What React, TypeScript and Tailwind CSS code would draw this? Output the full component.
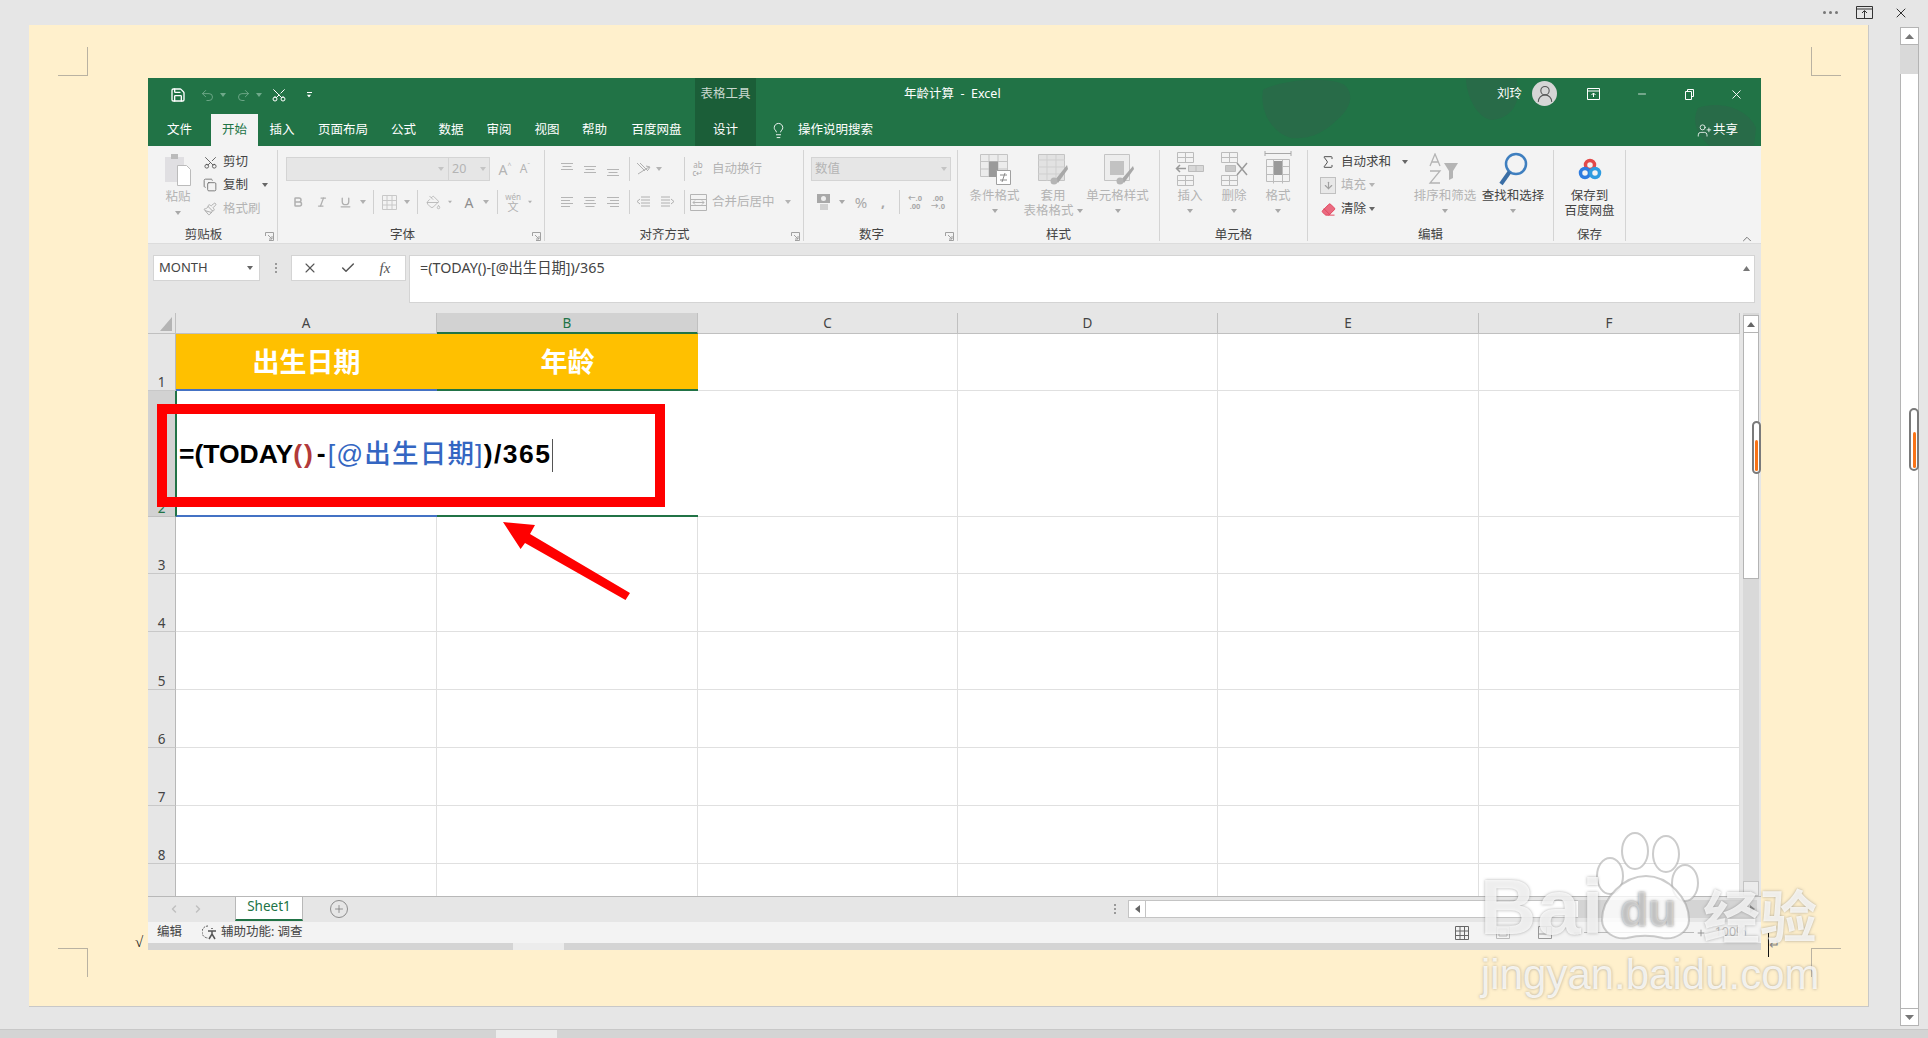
import React from 'react';
import {
  Save, Undo2, Redo2, Scissors, Copy, Paintbrush, Bold, Italic, Underline, PaintBucket,
  Lightbulb, X, Minus, Check, ChevronUp, ChevronLeft, ChevronRight, Plus, UserRound, UserPlus,
  Sigma, ArrowDown, Eraser,
} from 'lucide-react';

const Drop: React.FC<{ className?: string }> = ({ className = '' }) => (
  <svg width="6" height="4" viewBox="0 0 6 4" className={className}><path d="M0 0h6L3 4z" fill="currentColor" /></svg>
);

const Sep = ({ className = '' }: { className?: string }) => <div className={`w-px h-[24px] bg-[#d0d0d0] shrink-0 ${className}`} />;

const Launcher = () => (
  <svg width="9" height="9" viewBox="0 0 9 9" className="absolute right-[3px] top-[4px] text-[#a0a0a0]">
    <path d="M.5 4V.5H8.5V8.5H4M3 3l4 4M7 4v3H4" fill="none" stroke="currentColor" />
  </svg>
);

const Group: React.FC<{ w: string; label: string; labelPad?: string; launcher?: boolean; children: React.ReactNode }> = ({ w, label, labelPad = '', launcher, children }) => (
  <div className={`${w} shrink-0 h-[91px] flex flex-col border-r border-[#d4d4d4]`}>
    <div className="h-[78px] shrink-0">{children}</div>
    <div className={`relative h-[14px] flex items-center justify-center text-[#444] ${labelPad}`}>
      <span>{label}</span>
      {launcher && <Launcher />}
    </div>
  </div>
);

const Cell: React.FC<{ className: string; children?: React.ReactNode }> = ({ className, children }) => (
  <div className={`flex items-center justify-center shrink-0 ${className}`}>{children}</div>
);

// align lines: pos 0 left, 1 centre, 2 right
const AlignIcon = ({ pos, v = 0 }: { pos: number; v?: number }) => {
  const lens = [[1, 12], [1, 9], [1, 12], [1, 9]];
  return (
    <svg width="14" height="14" viewBox="0 0 14 14" fill="none" stroke="#b5b5b5">
      {lens.slice(0, v ? 3 : 4).map(([x, l], i) => {
        const start = pos === 0 ? x : pos === 1 ? (14 - l) / 2 : 13 - l;
        return <path key={i} d={`M${start} ${(v ? v + i * 3 : 2 + i * 3) + 0.5}h${l}`} />;
      })}
    </svg>
  );
};

const SheetIcon: React.FC<{ kind: string }> = ({ kind }) => {
  if (kind === 'cond') return (
    <svg width="32" height="32" viewBox="0 0 32 32">
      <path d="M1.5 1.5h27v22h-27z" fill="#ececec" stroke="#c4c4c4" />
      <path d="M10 1v23M19 1v23M1 8.5h28M1 16h28" stroke="#c4c4c4" />
      <path d="M10 8.5h9V24h-9z" fill="#9a9a9a" />
      <path d="M17.5 17.5h14v14h-14z" fill="#fff" stroke="#a0a0a0" />
      <path d="M21 22h7M21 27h7M26 20l-3 9" stroke="#8a8a8a" />
    </svg>
  );
  if (kind === 'table') return (
    <svg width="34" height="32" viewBox="0 0 34 32">
      <path d="M2.5 1.5h26v26h-26z" fill="#e2e2e2" stroke="#c4c4c4" />
      <path d="M2 7h27M11 2v26M20 2v26M2 14h27M2 21h27" stroke="#cfcfcf" />
      <path d="M31 12 19 27l3 3 10-14z" fill="#a8a8a8" />
      <circle cx="18" cy="28" r="3.5" fill="#b5b5b5" />
    </svg>
  );
  if (kind === 'style') return (
    <svg width="34" height="32" viewBox="0 0 34 32">
      <path d="M3.5 1.5h25v26h-25z" fill="#ededed" stroke="#c4c4c4" />
      <path d="M9 8h14v14H9z" fill="#c2c2c2" />
      <path d="M32 13 20 27l3 3 10-14z" fill="#a8a8a8" />
      <circle cx="19" cy="28" r="3.5" fill="#b5b5b5" />
    </svg>
  );
  if (kind === 'insert') return (
    <svg width="30" height="36" viewBox="0 0 30 36" fill="none" stroke="#bcbcbc">
      <path d="M2.5 1.5h16v10h-16zM2.5 6.5h16M10.5 1.5v10M2.5 24.5h16v10h-16zM2.5 29.5h16M10.5 24.5v10" />
      <path d="M13.5 14.5h15v6h-15zM21 14.5v6" fill="#d8d8d8" />
      <path d="M11 17.5H2M5 14l-3.500 3.500L5 21" stroke="#9a9a9a" strokeWidth="1.500" />
    </svg>
  );
  if (kind === 'delete') return (
    <svg width="30" height="36" viewBox="0 0 30 36" fill="none" stroke="#bcbcbc">
      <path d="M2.5 1.5h16v10h-16zM2.500 6.500h16M10.500 1.500v10M2.500 24.500h16v10h-16zM2.500 29.500h16M10.500 24.500v10" />
      <path d="M6.500 14.500h10v6h-10z" fill="#c8c8c8" />
      <path d="m18 12 10 12M28 12 18 24" stroke="#9a9a9a" strokeWidth="1.500" />
    </svg>
  );
  return (
    <svg width="30" height="38" viewBox="0 0 30 38" fill="none" stroke="#bcbcbc">
      <path d="M2 3.500h26M2 1v5M28 1v5" stroke="#a8a8a8" />
      <path d="M3.500 9.500h23v22h-23zM3.500 16.500h23M3.500 24.500h23M10.500 9.500v24M19.500 9.500v24" />
      <path d="M11 11h8v14h-8z" fill="#9a9a9a" stroke="none" />
    </svg>
  );
};

const BigBtn: React.FC<{ w: string; icon: React.ReactNode; l1: string; l2?: React.ReactNode; dark?: boolean; nodrop?: boolean }> = ({ w, icon, l1, l2, dark, nodrop }) => (
  <div className={`${w} shrink-0 flex flex-col items-center whitespace-nowrap ${dark ? 'text-[#444]' : 'text-[#b4b4b4]'}`}>
    <div className="h-[38px] flex items-center justify-center">{icon}</div>
    <div className="h-[15px] leading-[15px]">{l1}</div>
    <div className="h-[16px] leading-[16px] flex items-center justify-center gap-[3px]">
      {l2 ?? (!nodrop && <Drop className="text-[#a8a8a8]" />)}
    </div>
  </div>
);

const Ribbon = () => (
  <div className="h-[97px] bg-[#f3f3f3] flex pt-[4px] text-[12.5px]">
    <Group w="w-[130px]" label="剪贴板" labelPad="pr-[18px]" launcher>
      <div className="flex">
        <div className="w-[54px] pl-[6px] flex flex-col items-center text-[#b4b4b4]">
          <svg width="28" height="34" viewBox="0 0 28 34" className="mt-[3px]">
            <path d="M1 4h19v25H1z" fill="#e0dfe2" />
            <path d="M7 1h7v5H7z" fill="#bbb" />
            <path d="M13.500 12.500h9l4 4v16h-13z" fill="#fff" stroke="#bbb" />
          </svg>
          <span className="mt-[3px] leading-[14px]">粘贴</span>
          <Drop className="mt-[7px] text-[#a8a8a8]" />
        </div>
        <div className="flex flex-col pt-[1px]">
          <div className="h-[22px] flex items-center gap-[5px] text-[#444]"><Cell className="w-[16px]"><Scissors size={15} strokeWidth={1.4} className="text-[#555] -rotate-90" /></Cell>剪切</div>
          <div className="h-[24px] flex items-center gap-[5px] text-[#444]"><Cell className="w-[16px]"><Copy size={14} strokeWidth={1.4} className="text-[#666]" /></Cell>复制<Drop className="ml-[9px] text-[#666]" /></div>
          <div className="h-[24px] flex items-center gap-[5px] text-[#b4b4b4]"><Cell className="w-[16px]"><Paintbrush size={14} strokeWidth={1.6} className="text-[#a8a8a8]" /></Cell>格式刷</div>
        </div>
      </div>
    </Group>

    <Group w="w-[267px]" label="字体" labelPad="pr-[17px]" launcher>
      <div className="flex items-center pt-[7px] pl-[8px] text-[#b4b4b4]">
        <div className="w-[163px] h-[24px] bg-[#e6e6e6] border border-[#d4d4d4] flex items-center justify-end pr-[4px] shrink-0"><Drop className="text-[#c4c4c4]" /></div>
        <div className="w-[41px] h-[24px] bg-[#e6e6e6] border border-l-0 border-[#d4d4d4] flex items-center justify-between px-[3px] shrink-0">20<Drop className="text-[#c4c4c4]" /></div>
        <Cell className="w-[20px] ml-[5px] text-[14px]">A<sup className="text-[7px]">^</sup></Cell>
        <Cell className="w-[20px] text-[12px]">A<sup className="text-[7px]">ˇ</sup></Cell>
      </div>
      <div className="flex items-center h-[24px] mt-[9px] pl-[8px] text-[#b0b0b0]">
        <Cell className="w-[23px]"><Bold size={12} strokeWidth={3} /></Cell>
        <Cell className="w-[26px]"><Italic size={12} strokeWidth={2.500} /></Cell>
        <Cell className="w-[20px]"><Underline size={13} strokeWidth={2.500} /></Cell>
        <Cell className="w-[16px]"><Drop /></Cell>
        <Sep className="ml-[2px]" />
        <Cell className="w-[30px]">
          <svg width="15" height="15" viewBox="0 0 15 15" fill="none" stroke="#c8c8c8"><path d="M.5.5h14v14H.5zM.5 5.500h14M.5 10h14M5 .5v14M10 .5v14" /></svg>
        </Cell>
        <Cell className="w-[6px]"><Drop /></Cell>
        <Sep className="ml-[7px]" />
        <Cell className="w-[30px]"><PaintBucket size={15} strokeWidth={1.300} /></Cell>
        <Cell className="w-[4px]"><Drop /></Cell>
        <Cell className="w-[24px] ml-[5px] text-[14px] text-[#8e8e8e]">A</Cell>
        <Cell className="w-[10px]"><Drop /></Cell>
        <Sep className="ml-[6px]" />
        <Cell className="w-[30px] flex-col text-[8px] leading-[9px]"><span>wén</span><span className="text-[11px] leading-[11px]">文</span></Cell>
        <Cell className="w-[4px]"><Drop /></Cell>
      </div>
    </Group>

    <Group w="w-[259px]" label="对齐方式" labelPad="pr-[19px]" launcher>
      <div className="flex items-center h-[24px] mt-[7px] pl-[10px] text-[#b4b4b4]">
        <Cell className="w-[23px]"><AlignIcon pos={1} v={1} /></Cell>
        <Cell className="w-[23px]"><AlignIcon pos={1} v={4} /></Cell>
        <Cell className="w-[23px]"><AlignIcon pos={1} v={7} /></Cell>
        <Sep className="ml-[5px]" />
        <Cell className="w-[26px]">
          <svg width="15" height="14" viewBox="0 0 15 14" fill="none" stroke="#b0b0b0"><path d="M1 1l8 8M4 1l8 8M2 12 13 5M10 4l4 1-2 3" /></svg>
        </Cell>
        <Cell className="w-[6px]"><Drop /></Cell>
        <Sep className="ml-[22px]" />
        <Cell className="w-[26px] text-[8px] leading-[8px] flex-col text-[#a8a8a8]"><span>ab</span><span>c↵</span></Cell>
        <span className="ml-px whitespace-nowrap">自动换行</span>
      </div>
      <div className="flex items-center h-[24px] mt-[9px] pl-[10px] text-[#b4b4b4]">
        <Cell className="w-[23px]"><AlignIcon pos={0} /></Cell>
        <Cell className="w-[23px]"><AlignIcon pos={1} /></Cell>
        <Cell className="w-[23px]"><AlignIcon pos={2} /></Cell>
        <Sep className="ml-[5px]" />
        <Cell className="w-[26px]">
          <svg width="14" height="14" viewBox="0 0 14 14" fill="none" stroke="#b0b0b0"><path d="M5 2h9M5 5h9M5 8h9M5 11h9M4 4 1 6.500 4 9" /></svg>
        </Cell>
        <Cell className="w-[23px]">
          <svg width="14" height="14" viewBox="0 0 14 14" fill="none" stroke="#b0b0b0"><path d="M0 2h9M0 5h9M0 8h9M0 11h9M10 4l3 2.500L10 9" /></svg>
        </Cell>
        <Sep className="ml-[5px]" />
        <Cell className="w-[26px]">
          <svg width="17" height="17" viewBox="0 0 17 17" fill="none" stroke="#b4b4b4"><path d="M.5.5h16v16H.5zM.5 5.500h16M.5 11.500h16M3 8.500h11M5 6.500l-2 2 2 2M12 6.500l2 2-2 2" /></svg>
        </Cell>
        <span className="ml-px whitespace-nowrap">合并后居中</span>
        <Drop className="ml-[10px]" />
      </div>
    </Group>

    <Group w="w-[154px]" label="数字" labelPad="pr-[18px]" launcher>
      <div className="ml-[7px] mt-[7px] w-[140px] h-[24px] bg-[#e6e6e6] border border-[#d4d4d4] flex items-center justify-between px-[3px] text-[#b4b4b4]">数值<Drop className="text-[#c4c4c4]" /></div>
      <div className="flex items-center h-[24px] mt-[9px] pl-[8px] text-[#a8a8a8]">
        <Cell className="w-[24px]">
          <svg width="14" height="16" viewBox="0 0 14 16"><path d="M0 0h13v9H0z" fill="#a8a8a8" /><circle cx="6.500" cy="4.500" r="2.500" fill="#eee" /><path d="M3 10h8v6H3z" fill="#d0d0d0" /></svg>
        </Cell>
        <Cell className="w-[12px]"><Drop /></Cell>
        <Cell className="w-[26px] text-[15px] leading-none">%</Cell>
        <Cell className="w-[18px] font-bold text-[14px] leading-[14px]">,</Cell>
        <Sep className="ml-[7px]" />
        <Cell className="w-[30px] flex-col text-[7.500px] leading-[8px] font-bold"><span>←.0</span><span>.00</span></Cell>
        <Cell className="w-[16px] flex-col text-[7.500px] leading-[8px] font-bold"><span>.00</span><span>→.0</span></Cell>
      </div>
    </Group>

    <Group w="w-[202px]" label="样式">
      <div className="flex">
        <BigBtn w="w-[73px]" icon={<SheetIcon kind="cond" />} l1="条件格式" />
        <BigBtn w="w-[44px]" icon={<SheetIcon kind="table" />} l1="套用" l2={<>表格格式<Drop className="text-[#a8a8a8]" /></>} />
        <BigBtn w="w-[85px]" icon={<SheetIcon kind="style" />} l1="单元格样式" />
      </div>
    </Group>

    <Group w="w-[148px]" label="单元格">
      <div className="flex pl-[8px]">
        <BigBtn w="w-[44px]" icon={<SheetIcon kind="insert" />} l1="插入" />
        <BigBtn w="w-[44px]" icon={<SheetIcon kind="delete" />} l1="删除" />
        <BigBtn w="w-[44px]" icon={<SheetIcon kind="format" />} l1="格式" />
      </div>
    </Group>

    <Group w="w-[246px]" label="编辑">
      <div className="flex pl-[12px]">
        <div className="w-[93px] shrink-0 flex flex-col pt-[1px]">
          <div className="h-[22px] flex items-center gap-[5px] text-[#444]"><Cell className="w-[16px]"><Sigma size={18} strokeWidth={1.400} className="text-[#444]" /></Cell>自动求和<Drop className="ml-[6px] text-[#666]" /></div>
          <div className="h-[24px] flex items-center gap-[5px] text-[#b4b4b4]"><Cell className="w-[16px] h-[17px] border border-[#c0c0c0] bg-[#e8e8e8]"><ArrowDown size={11} strokeWidth={2.500} className="text-[#a0a0a0]" /></Cell>填充<Drop className="-ml-[2px]" /></div>
          <div className="h-[24px] flex items-center gap-[5px] text-[#444]"><Cell className="w-[16px]"><Eraser size={15} strokeWidth={1.500} className="text-[#e0455d] fill-[#ea6a80]" /></Cell>清除<Drop className="-ml-[2px] text-[#666]" /></div>
        </div>
        <BigBtn w="w-[64px]" icon={
          <svg width="34" height="32" viewBox="0 0 34 32" fill="none" stroke="#b4b4b4">
            <path d="M2 13 7 1l5 12M4 9h6M2 18h10L2 30h10" strokeWidth="1.300" />
            <path d="M16 10h14l-5 8v7l-4 2v-9z" fill="#b4b4b4" stroke="none" />
          </svg>
        } l1="排序和筛选" />
        <BigBtn w="w-[72px]" dark icon={
          <svg width="30" height="36" viewBox="0 0 30 36" fill="none">
            <circle cx="18" cy="13" r="10" stroke="#3f7fbf" strokeWidth="2.500" />
            <path d="M11.500 21 3 33" stroke="#3a6ea5" strokeWidth="4" />
          </svg>
        } l1="查找和选择" />
      </div>
    </Group>

    <Group w="w-[72px]" label="保存">
      <BigBtn w="w-full" dark nodrop icon={
        <svg width="24" height="24" viewBox="0 0 24 24" fill="none" strokeWidth="3.500">
          <circle cx="12" cy="8" r="4.500" stroke="#e24a4a" />
          <circle cx="7" cy="16" r="4.500" stroke="#2e7ce0" />
          <circle cx="17" cy="16" r="4.500" stroke="#2e9ce0" />
        </svg>
      } l1="保存到" l2="百度网盘" />
    </Group>

    <div className="flex-1 flex items-start justify-end pr-[7px] pt-[82px]"><ChevronUp size={14} strokeWidth={1.500} className="text-[#666]" /></div>
  </div>
);

const COLS = ['A', 'B', 'C', 'D', 'E', 'F'];
const ROWS = ['1', '2', '3', '4', '5', '6', '7', '8', ''];

const Grid = () => (
  <div className="w-[1592px] shrink-0 h-[583px] overflow-hidden grid grid-cols-[28px_261px_261px_260px_260px_261px_261px] grid-rows-[21px_57px_126px_57px_58px_58px_58px_58px_58px_40px] bg-white">
    <div className="bg-[#e6e6e6] border-r border-b border-[#c0c0c0] flex items-end justify-end pr-[3px] pb-[2px]">
      <svg width="12" height="14" viewBox="0 0 12 14"><path d="M12 0v14H0z" fill="#b4b4b4" /></svg>
    </div>
    {COLS.map((c) => (
      <div key={c} className={`flex items-center justify-center pt-[2px] text-[13.500px] leading-none border-r border-[#c0c0c0] ${c === 'B' ? 'bg-[#d2d2d2] text-[#217346] border-b-2 border-b-[#217346]' : 'bg-[#e6e6e6] text-[#444] border-b border-b-[#c0c0c0]'}`}>{c}</div>
    ))}
    {ROWS.map((r, i) => (
      <React.Fragment key={i}>
        <div className={`flex items-end justify-center text-[13.500px] leading-[16px] border-r border-b ${i === 1 ? 'bg-[#d2d2d2] text-[#217346] border-r-[#217346] border-b-[#c0c0c0]' : 'bg-[#e6e6e6] text-[#444] border-r-[#b8b8b8] border-b-[#c8c8c8]'}`}>{r}</div>
        {COLS.map((c, j) => {
          if (i === 0 && j === 0) return <div key={c} className="bg-[#ffc000] flex items-center justify-center pb-[1px] text-white font-bold text-[27px] leading-none border-b-2 border-[#4472c4]">出生日期</div>;
          if (i === 0 && j === 1) return <div key={c} className="bg-[#ffc000] flex items-center justify-center pb-[1px] text-white font-bold text-[27px] leading-none border-b-2 border-[#217346]">年龄</div>;
          if (i === 1 && j === 0) return (
            <div key={c} className="flex items-center pl-[2px] pt-[4px] whitespace-nowrap border-l border-b-2 border-l-[#217346] border-b-[#4472c4] [font-family:'Liberation_Sans','Noto_Sans_CJK_SC',sans-serif] font-bold text-[26.500px] leading-none text-black">
              <span>=(TODAY<span className="text-[#b23a3a] tracking-[2px]">()</span><span className="mx-[2px]">-</span><span className="text-[#3466c2] font-medium tracking-[1.200px]">[@出生日期]</span><span className="tracking-[1.500px]">)/365</span><span className="inline-block w-px h-[33px] bg-[#555] align-middle" /></span>
            </div>
          );
          if (i === 1 && j === 1) return <div key={c} className="border-b-2 border-[#217346]" />;
          return <div key={c} className="border-r border-b border-[#e0e0e0]" />;
        })}
      </React.Fragment>
    ))}
  </div>
);

const SliderHandle = ({ outer, fill }: { outer: string; fill: string }) => (
  <div className={`absolute rounded-full border-2 border-[#7a7a7a] bg-white flex flex-col justify-end items-center pb-[1px] ${outer}`}>
    <div className={`w-[3px] bg-[#f97316] rounded-full ${fill}`} />
  </div>
);

const Excel = () => (
  <div className="w-[1613px] shrink-0 h-[872px] flex flex-col text-[#444] relative">
    <div className="relative bg-[#217346] shrink-0">
      <svg className="absolute inset-0" width="1613" height="68" viewBox="0 0 1613 68" fill="#286b48">
        <path d="M1115 12c18-10 60-14 80-6 12 8 8 24-4 34-10 10-24 22-48 20-16-4-32-24-28-48zM1318 0h50c6 18 0 40-24 42-16-2-26-26-26-42zM1550 30c20-8 50 0 58 20l-2 18h-44c-10-8-20-22-12-38z" />
      </svg>
      {/* title bar */}
      <div className="relative h-[36px] flex text-white text-[12.5px]">
        <div className="w-[547px] shrink-0 flex items-center pb-[2px]">
          <Cell className="w-[47px] pl-[13px]"><Save size={16} strokeWidth={2} /></Cell>
          <Cell className="w-[24px]"><Undo2 size={15} strokeWidth={1.500} className="text-[#6fa98a]" /></Cell>
          <Drop className="text-[#6fa98a] ml-[1px]" />
          <Cell className="w-[24px] ml-[5px]"><Redo2 size={15} strokeWidth={1.500} className="text-[#6fa98a]" /></Cell>
          <Drop className="text-[#6fa98a] ml-[1px]" />
          <Cell className="w-[24px] ml-[5px]"><Scissors size={16} strokeWidth={1.500} className="-rotate-90" /></Cell>
          <span className="ml-[15px] flex flex-col items-center gap-[1px]"><span className="w-[5px] h-px bg-white" /><Drop className="scale-75" /></span>
        </div>
        <div className="w-[61px] shrink-0 bg-[#1b5e38] flex items-center justify-center pb-[4px] text-[#c9d8cf]">表格工具</div>
        <div className="w-[148px] shrink-0" />
        <div className="w-[100px] shrink-0 flex items-center pb-[4px] whitespace-nowrap">年龄计算&nbsp; -&nbsp; Excel</div>
        <div className="w-[518px] shrink-0 flex items-center justify-end pb-[4px] whitespace-nowrap">刘玲</div>
        <Cell className="w-[25px] h-[25px] mt-[3px] ml-[10px] rounded-full bg-[#d6d6d6]"><UserRound size={20} strokeWidth={1.300} className="text-[#555]" /></Cell>
        <Cell className="w-[22px] ml-[25px] pb-[4px]">
          <svg width="13" height="12" viewBox="0 0 13 12" fill="none" stroke="#fff"><path d="M.5.5h12v11H.5zM.5 3h12M6.500 5v4M4.500 7l2-2 2 2" /></svg>
        </Cell>
        <Cell className="w-[22px] ml-[27px] pb-[4px]"><Minus size={12} strokeWidth={1.500} /></Cell>
        <Cell className="w-[22px] ml-[24px] pb-[4px]">
          <svg width="11" height="11" viewBox="0 0 11 11" fill="none" stroke="#fff"><path d="M2.500 2.500h6v8h-6zM4.500 2V.5h6v7H9" /></svg>
        </Cell>
        <Cell className="w-[22px] ml-[26px] pb-[4px]"><X size={15} strokeWidth={1.500} /></Cell>
      </div>

      {/* tabs */}
      <div className="relative h-[32px] flex items-center text-white text-[12.5px]">
        <Cell className="w-[63px] h-full">文件</Cell>
        <Cell className="w-[47px] h-full bg-[#f3f3f3] text-[#217346]">开始</Cell>
        <Cell className="w-[48px] h-full">插入</Cell>
        <Cell className="w-[74px] h-full">页面布局</Cell>
        <Cell className="w-[47px] h-full">公式</Cell>
        <Cell className="w-[48px] h-full">数据</Cell>
        <Cell className="w-[48px] h-full">审阅</Cell>
        <Cell className="w-[48px] h-full">视图</Cell>
        <Cell className="w-[47px] h-full">帮助</Cell>
        <Cell className="w-[77px] h-full">百度网盘</Cell>
        <Cell className="w-[61px] h-full bg-[#1b5e38]">设计</Cell>
        <Cell className="w-[44px] h-full"><Lightbulb size={17} strokeWidth={1.300} /></Cell>
        <span className="-ml-[2px]">操作说明搜索</span>
        <div className="ml-auto mr-[23px] flex items-center gap-[1px]"><UserPlus size={15} strokeWidth={1.300} /><span>共享</span></div>
      </div>
    </div>

    <Ribbon />

    {/* formula bar */}
    <div className="h-[70px] bg-[#e6e6e6] border-t border-[#dcdcdc] pt-[11px] flex items-start shrink-0">
      <div className="ml-[5px] w-[107px] h-[26px] bg-white border border-[#d4d4d4] flex items-center justify-between pl-[5px] pr-[6px] text-[13px]">MONTH<Drop className="text-[#666]" /></div>
      <Cell className="w-[31px] h-[26px] text-[#aaa] flex-col gap-[2px]"><span className="w-[2px] h-[2px] bg-[#999]" /><span className="w-[2px] h-[2px] bg-[#999]" /><span className="w-[2px] h-[2px] bg-[#999]" /></Cell>
      <div className="w-[115px] h-[26px] bg-white border border-[#d4d4d4] flex items-center text-[#555]">
        <Cell className="w-[36px]"><X size={16} strokeWidth={1.600} /></Cell>
        <Cell className="w-[39px]"><Check size={16} strokeWidth={2.200} /></Cell>
        <Cell className="w-[36px] italic text-[15px] [font-family:'Liberation_Serif',serif]">fx</Cell>
      </div>
      <div className="ml-[3px] w-[1346px] h-[48px] bg-white border border-[#d4d4d4] flex items-start justify-between pl-[10px] pr-[4px] pt-[3px] text-[14.300px] leading-[18px] text-[#444]">
        <span>=(TODAY()-[@出生日期])/365</span>
        <svg width="7" height="5" viewBox="0 0 7 5" className="mt-[7px] text-[#777]"><path d="M0 5 3.500 0 7 5z" fill="currentColor" /></svg>
      </div>
    </div>

    {/* sheet */}
    <div className="flex relative shrink-0 h-[583px]">
      <Grid />
      <div className="w-[3px] bg-[#e6e6e6] shrink-0" />
      <div className="w-[16px] shrink-0 flex flex-col bg-[#d9d9d9]">
        <div className="h-[18px] mt-[2px] bg-white border border-[#b4b4b4] flex items-center justify-center"><svg width="8" height="5" viewBox="0 0 8 5"><path d="M0 5 4 0l4 5z" fill="#666" /></svg></div>
        <div className="h-[246px] bg-white border-x border-b border-[#b4b4b4]" />
        <div className="flex-1" />
        <div className="h-[15px] bg-[#ececec] border border-[#c4c4c4]" />
      </div>
      <div className="w-[2px] bg-[#e6e6e6] shrink-0" />
      <SliderHandle outer="left-[1604px] top-[108px] w-[9px] h-[53px]" fill="h-[31px]" />
    </div>

    {/* sheet tabs */}
    <div className="h-[26px] bg-[#e6e6e6] border-t border-[#b8b8b8] flex items-start text-[#c0c0c0] shrink-0">
      <Cell className="w-[38px] h-[24px] pl-[14px]"><ChevronLeft size={12} strokeWidth={3} /></Cell>
      <Cell className="w-[24px] h-[24px]"><ChevronRight size={12} strokeWidth={3} /></Cell>
      <div className="ml-[25px] w-[68px] h-[24px] bg-white border-x border-b-2 border-x-[#b8b8b8] border-b-[#217346] flex items-center justify-center pb-[3px] text-[13.500px] text-[#217346]">Sheet1</div>
      <Cell className="ml-[27px] mt-[3px] w-[18px] h-[18px] rounded-full border border-[#8c8c8c] text-[#777]"><Plus size={12} strokeWidth={1.500} /></Cell>
      <div className="ml-[757px] w-[20px] h-[24px] flex flex-col items-center justify-center gap-[2px]"><span className="w-[2px] h-[2px] bg-[#999]" /><span className="w-[2px] h-[2px] bg-[#999]" /><span className="w-[2px] h-[2px] bg-[#999]" /></div>
      <div className="ml-[3px] mt-[3px] w-[18px] h-[18px] bg-white border border-[#c4c4c4] flex items-center justify-center text-[#555]"><svg width="5" height="8" viewBox="0 0 5 8"><path d="M5 0v8L0 4z" fill="#666" /></svg></div>
      <div className="mt-[3px] w-[432px] h-[18px] bg-white border-y border-[#c4c4c4]" />
      <div className="mt-[3px] w-[179px] h-[18px] bg-[#d4d4d4] flex items-center justify-end pr-[2px]"><svg width="5" height="8" viewBox="0 0 5 8"><path d="M0 0v8l5-4z" fill="#888" /></svg></div>
    </div>

    {/* status bar */}
    <div className="h-[21px] bg-[#f3f3f3] flex items-center text-[12.5px] text-[#444] shrink-0">
      <span className="ml-[9px]">编辑</span>
      <svg width="15" height="15" viewBox="0 0 15 15" fill="none" stroke="#555" className="ml-[20px]">
        <path d="M6 1a6 6 0 0 0 0 12" strokeDasharray="2 1" /><path d="M10 3v1M6 6h8M10 6v3M7 14l3-5 3 5" strokeWidth="1.500" />
      </svg>
      <span className="ml-[4px]">辅助功能: 调查</span>
      <svg width="14" height="14" viewBox="0 0 14 14" fill="none" stroke="#666" className="ml-[1152px]"><path d="M.5.5h13v13H.5zM.5 5h13M.5 9.500h13M5 .5v13M9.500 .5v13" /></svg>
      <svg width="14" height="13" viewBox="0 0 14 13" fill="none" stroke="#bbb" className="ml-[27px]"><path d="M.5.5h13v12H.5zM3 3h8v7H3z" /></svg>
      <svg width="14" height="13" viewBox="0 0 14 13" fill="none" stroke="#999" className="ml-[28px]"><path d="M.5.5h13v12H.5zM.5 8h8V.5" /></svg>
      <Minus size={10} className="ml-[20px] text-[#888]" />
      <div className="w-[110px] h-px bg-[#bbb] mx-[2px]" />
      <Plus size={10} className="text-[#888]" />
      <span className="ml-[9px] text-[#b8b8b8]">100%</span>
    </div>
    <div className="h-[7px] bg-[#d4d4d4] flex shrink-0">
      <div className="w-[365px]" />
      <div className="w-[51px] bg-[#ececec]" />
    </div>
  </div>
);

const CropMark = ({ className }: { className: string }) => <div className={`absolute w-[30px] h-[29px] border-[#b9b2a2] ${className}`} />;

const App = () => (
  <div className="relative w-[1928px] h-[1038px] overflow-hidden bg-[#e6e6e6] flex flex-col [font-family:'Noto_Sans','Noto_Sans_CJK_SC',sans-serif]">
    {/* document chrome */}
    <div className="h-[25px] shrink-0 flex items-center justify-end relative">
      <div className="flex gap-[3px] mr-[18px]"><span className="w-[3px] h-[3px] rounded-full bg-[#777]" /><span className="w-[3px] h-[3px] rounded-full bg-[#777]" /><span className="w-[3px] h-[3px] rounded-full bg-[#777]" /></div>
      <svg width="17" height="13" viewBox="0 0 17 13" fill="none" stroke="#333" className="mr-[20px]"><path d="M.5.5h16v12H.5zM.5 3h16M8.500 5v8M6 7l2.500-2.500L11 7" /></svg>
      <X size={16} strokeWidth={1.400} className="mr-[19px] text-[#222]" />
    </div>

    <div className="h-[982px] shrink-0 flex items-start pl-[29px]">
      <div className="relative w-[1840px] h-[982px] shrink-0 bg-[#fff0cc] border-r border-b border-[#c8c8c8] pt-[53px] pl-[119px]">
        <CropMark className="left-[29px] top-[22px] border-r border-b" />
        <CropMark className="left-[1782px] top-[22px] border-l border-b" />
        <CropMark className="left-[29px] top-[923px] border-r border-t" />
        <CropMark className="left-[1782px] top-[923px] border-l border-t" />
        <Excel />
        <span className="absolute left-[106px] top-[907px] text-[15px] leading-[20px] text-[#222] [font-family:'Liberation_Serif',serif]">√</span>
        <div className="absolute left-[1739px] top-[908px] w-px h-[24px] bg-[#111]" />
        <span className="absolute left-[1740px] top-[911px] text-[13px] leading-[16px] text-[#888]">↵</span>
      </div>
      <div className="relative ml-[31px] mt-[2px] w-[19px] h-[999px] shrink-0 flex flex-col">
        <div className="h-[18px] bg-white border border-[#b4b4b4] flex items-center justify-center"><svg width="9" height="5" viewBox="0 0 9 5"><path d="M0 5 4.500 0 9 5z" fill="#777" /></svg></div>
        <div className="h-[29px] bg-[#d9d9d9] border-r border-[#b4b4b4]" />
        <div className="flex-1 bg-white border-x border-[#b4b4b4]" />
        <div className="h-[18px] bg-white border border-[#b4b4b4] flex items-center justify-center"><svg width="9" height="5" viewBox="0 0 9 5"><path d="M0 0h9L4.500 5z" fill="#777" /></svg></div>
        <SliderHandle outer="left-[9px] top-[381px] w-[10px] h-[63px]" fill="h-[36px]" />
      </div>
    </div>

    <div className="mt-[22px] flex-1 bg-[#d4d4d4] flex border-t border-[#c8c8c8]">
      <div className="w-[496px]" />
      <div className="w-[61px] bg-[#ececec]" />
    </div>

    {/* red annotation */}
    <div className="absolute left-[157px] top-[404px] w-[508px] h-[103px] border-x-[10px] border-y-[10px] border-[#ff0000]" />
    <svg className="absolute left-[495px] top-[515px]" width="145" height="92" viewBox="495 515 145 92">
      <polygon points="503,522 535,525 530,534 630,593 625.500,600 525,543 520.600,549" fill="#ff0000" />
    </svg>

    {/* watermark */}
    <div className="absolute left-[1478px] top-[830px] w-[350px] h-[170px] select-none">
      <svg className="absolute left-[115px] top-[0px]" width="110" height="115" viewBox="0 0 110 115" fill="#ffffff" fillOpacity="0.78" stroke="#9a9a9a" strokeOpacity="0.5" strokeWidth="2">
        <ellipse cx="17" cy="46" rx="13" ry="18" />
        <ellipse cx="42" cy="21" rx="13" ry="18" />
        <ellipse cx="73" cy="24" rx="13" ry="18" />
        <ellipse cx="92" cy="53" rx="13" ry="18" />
        <path d="M9 90c0-22 22-44 44-44s43 22 43 44c0 12-14 20-26 18-12-3-24-3-36 0-12 2-25-6-25-18z" />
      </svg>
      <span className="absolute left-[2px] top-[31px] text-[78px] leading-[92px] font-bold tracking-[1px] text-white/80 [font-family:'Liberation_Sans',sans-serif] [text-shadow:0_0_3px_rgba(90,90,90,0.5)]">Bai</span>
      <span className="absolute left-[142px] top-[52px] text-[46px] leading-[56px] font-bold text-[#e8e8e8]/60 [font-family:'Liberation_Sans',sans-serif] [text-shadow:0_0_3px_rgba(90,90,90,0.7)]">du</span>
      <span className="absolute left-[225px] top-[53px] text-[57px] leading-[60px] font-bold text-white/80 [font-family:'Noto_Sans_CJK_SC',sans-serif] [text-shadow:0_0_3px_rgba(90,90,90,0.5)]">经验</span>
      <span className="absolute left-[3px] top-[121px] text-[42px] leading-[48px] text-white/80 [font-family:'Liberation_Sans',sans-serif] [text-shadow:0_0_3px_rgba(90,90,90,0.5)]">jingyan.baidu.com</span>
    </div>
  </div>
);

export default App;
